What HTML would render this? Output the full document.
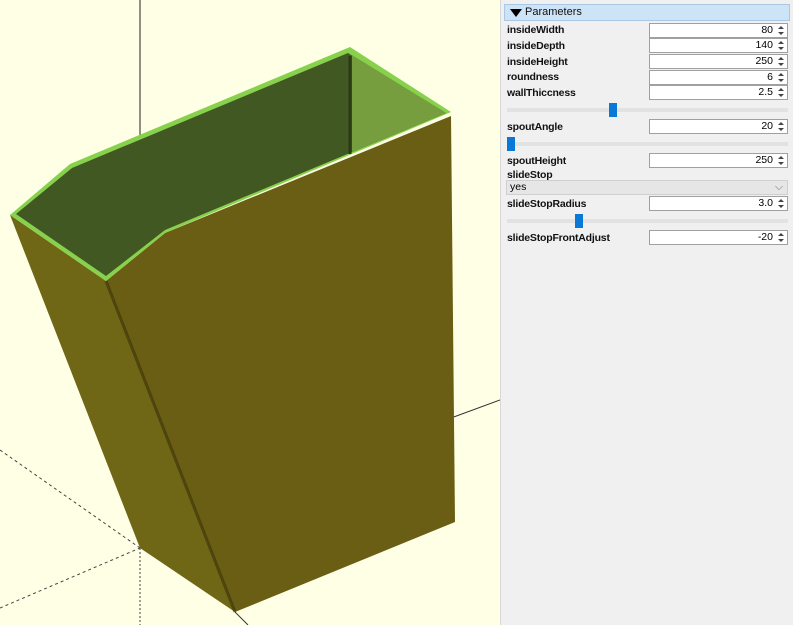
<!DOCTYPE html>
<html><head><style>
body{margin:0;width:793px;height:625px;background:#ffffe5;position:relative;overflow:hidden;font-family:"Liberation Sans",sans-serif}
#panel{position:absolute;left:500px;top:0;width:293px;height:625px;background:#f0f0f0;border-left:1px solid #d8d8d8}
.hdr{position:absolute;left:3px;top:4px;width:286px;height:17px;background:#cde3f6;border:1px solid #a8c8e6;box-sizing:border-box;font-size:11px;line-height:15px;padding-left:20px;color:#111}
.hdr:before{content:"";position:absolute;left:5px;top:4px;border-left:6px solid transparent;border-right:6px solid transparent;border-top:8px solid #000}
.lb{position:absolute;left:6px;font-size:10.5px;font-weight:bold;color:#111;letter-spacing:-0.2px}
.in{position:absolute;left:148px;width:139px;height:15px;background:#fff;border:1px solid #a0a0a0;box-sizing:border-box;font-size:10.5px;text-align:right;padding-right:14px;line-height:13px}
.in:after{content:"";position:absolute;right:3px;top:2px;width:0;height:0;border-left:3px solid transparent;border-right:3px solid transparent;border-bottom:3px solid #444}
.in:before{content:"";position:absolute;right:3px;top:8px;width:0;height:0;border-left:3px solid transparent;border-right:3px solid transparent;border-top:3px solid #444}
.tr{position:absolute;left:6px;width:281px;height:4px;background:#e2e2e2}
.hd{position:absolute;width:8px;height:14px;background:#0a78d7}
.sel{position:absolute;left:5px;top:180px;width:282px;height:15px;background:#e6e6e6;border:1px solid #cfcfcf;box-sizing:border-box;font-size:10.5px;line-height:13px;padding-left:3px}
</style></head><body>
<svg width="500" height="625" style="position:absolute;left:0;top:0">
<line x1="140" y1="0" x2="140" y2="138" stroke="#222" stroke-width="1"/>
<line x1="0" y1="450" x2="140" y2="548" stroke="#444" stroke-dasharray="3,3"/>
<line x1="0" y1="608" x2="140" y2="548" stroke="#444" stroke-dasharray="3,3"/>
<line x1="140" y1="548" x2="140" y2="625" stroke="#444" stroke-dasharray="2,2"/>
<line x1="235" y1="612" x2="248" y2="625" stroke="#333"/>
<line x1="451" y1="418" x2="500" y2="400" stroke="#333"/>
<polygon points="10,215 106,281 235,612 140,548" fill="#6f6616"/>
<polygon points="106,281 165,233 451,116 455,522 235,612" fill="#6a5e14"/>
<path d="M106,281 L235,612" stroke="#3f3608" stroke-width="3" opacity=".7"/>
<polygon points="10,215 70,164 350,47 451,112 165,233 106,281" fill="#87d14d"/>
<polygon points="16,214 72,168 348,53 446,113 165,230 106,276" fill="#415822"/>
<polygon points="352,55 446,113 352,152" fill="#769e3e"/>
<line x1="350" y1="56" x2="350" y2="154" stroke="#2a3a12" stroke-width="3"/>
</svg>
<div id="panel">
<div class="hdr">Parameters</div>
<div class="lb" style="top:24px">insideWidth</div><div class="in" style="top:23px">80</div>
<div class="lb" style="top:40px">insideDepth</div><div class="in" style="top:38px">140</div>
<div class="lb" style="top:56px">insideHeight</div><div class="in" style="top:54px">250</div>
<div class="lb" style="top:71px">roundness</div><div class="in" style="top:70px">6</div>
<div class="lb" style="top:87px">wallThiccness</div><div class="in" style="top:85px">2.5</div>
<div class="tr" style="top:108px"></div><div class="hd" style="left:108px;top:103px"></div>
<div class="lb" style="top:121px">spoutAngle</div><div class="in" style="top:119px">20</div>
<div class="tr" style="top:142px"></div><div class="hd" style="left:6px;top:137px"></div>
<div class="lb" style="top:155px">spoutHeight</div><div class="in" style="top:153px">250</div>
<div class="lb" style="top:169px">slideStop</div>
<div class="sel">yes<span style="position:absolute;right:4px;top:0;color:#777">⌵</span></div>
<div class="lb" style="top:198px">slideStopRadius</div><div class="in" style="top:196px">3.0</div>
<div class="tr" style="top:219px"></div><div class="hd" style="left:74px;top:214px"></div>
<div class="lb" style="top:232px">slideStopFrontAdjust</div><div class="in" style="top:230px">-20</div>
</div>
</body></html>
